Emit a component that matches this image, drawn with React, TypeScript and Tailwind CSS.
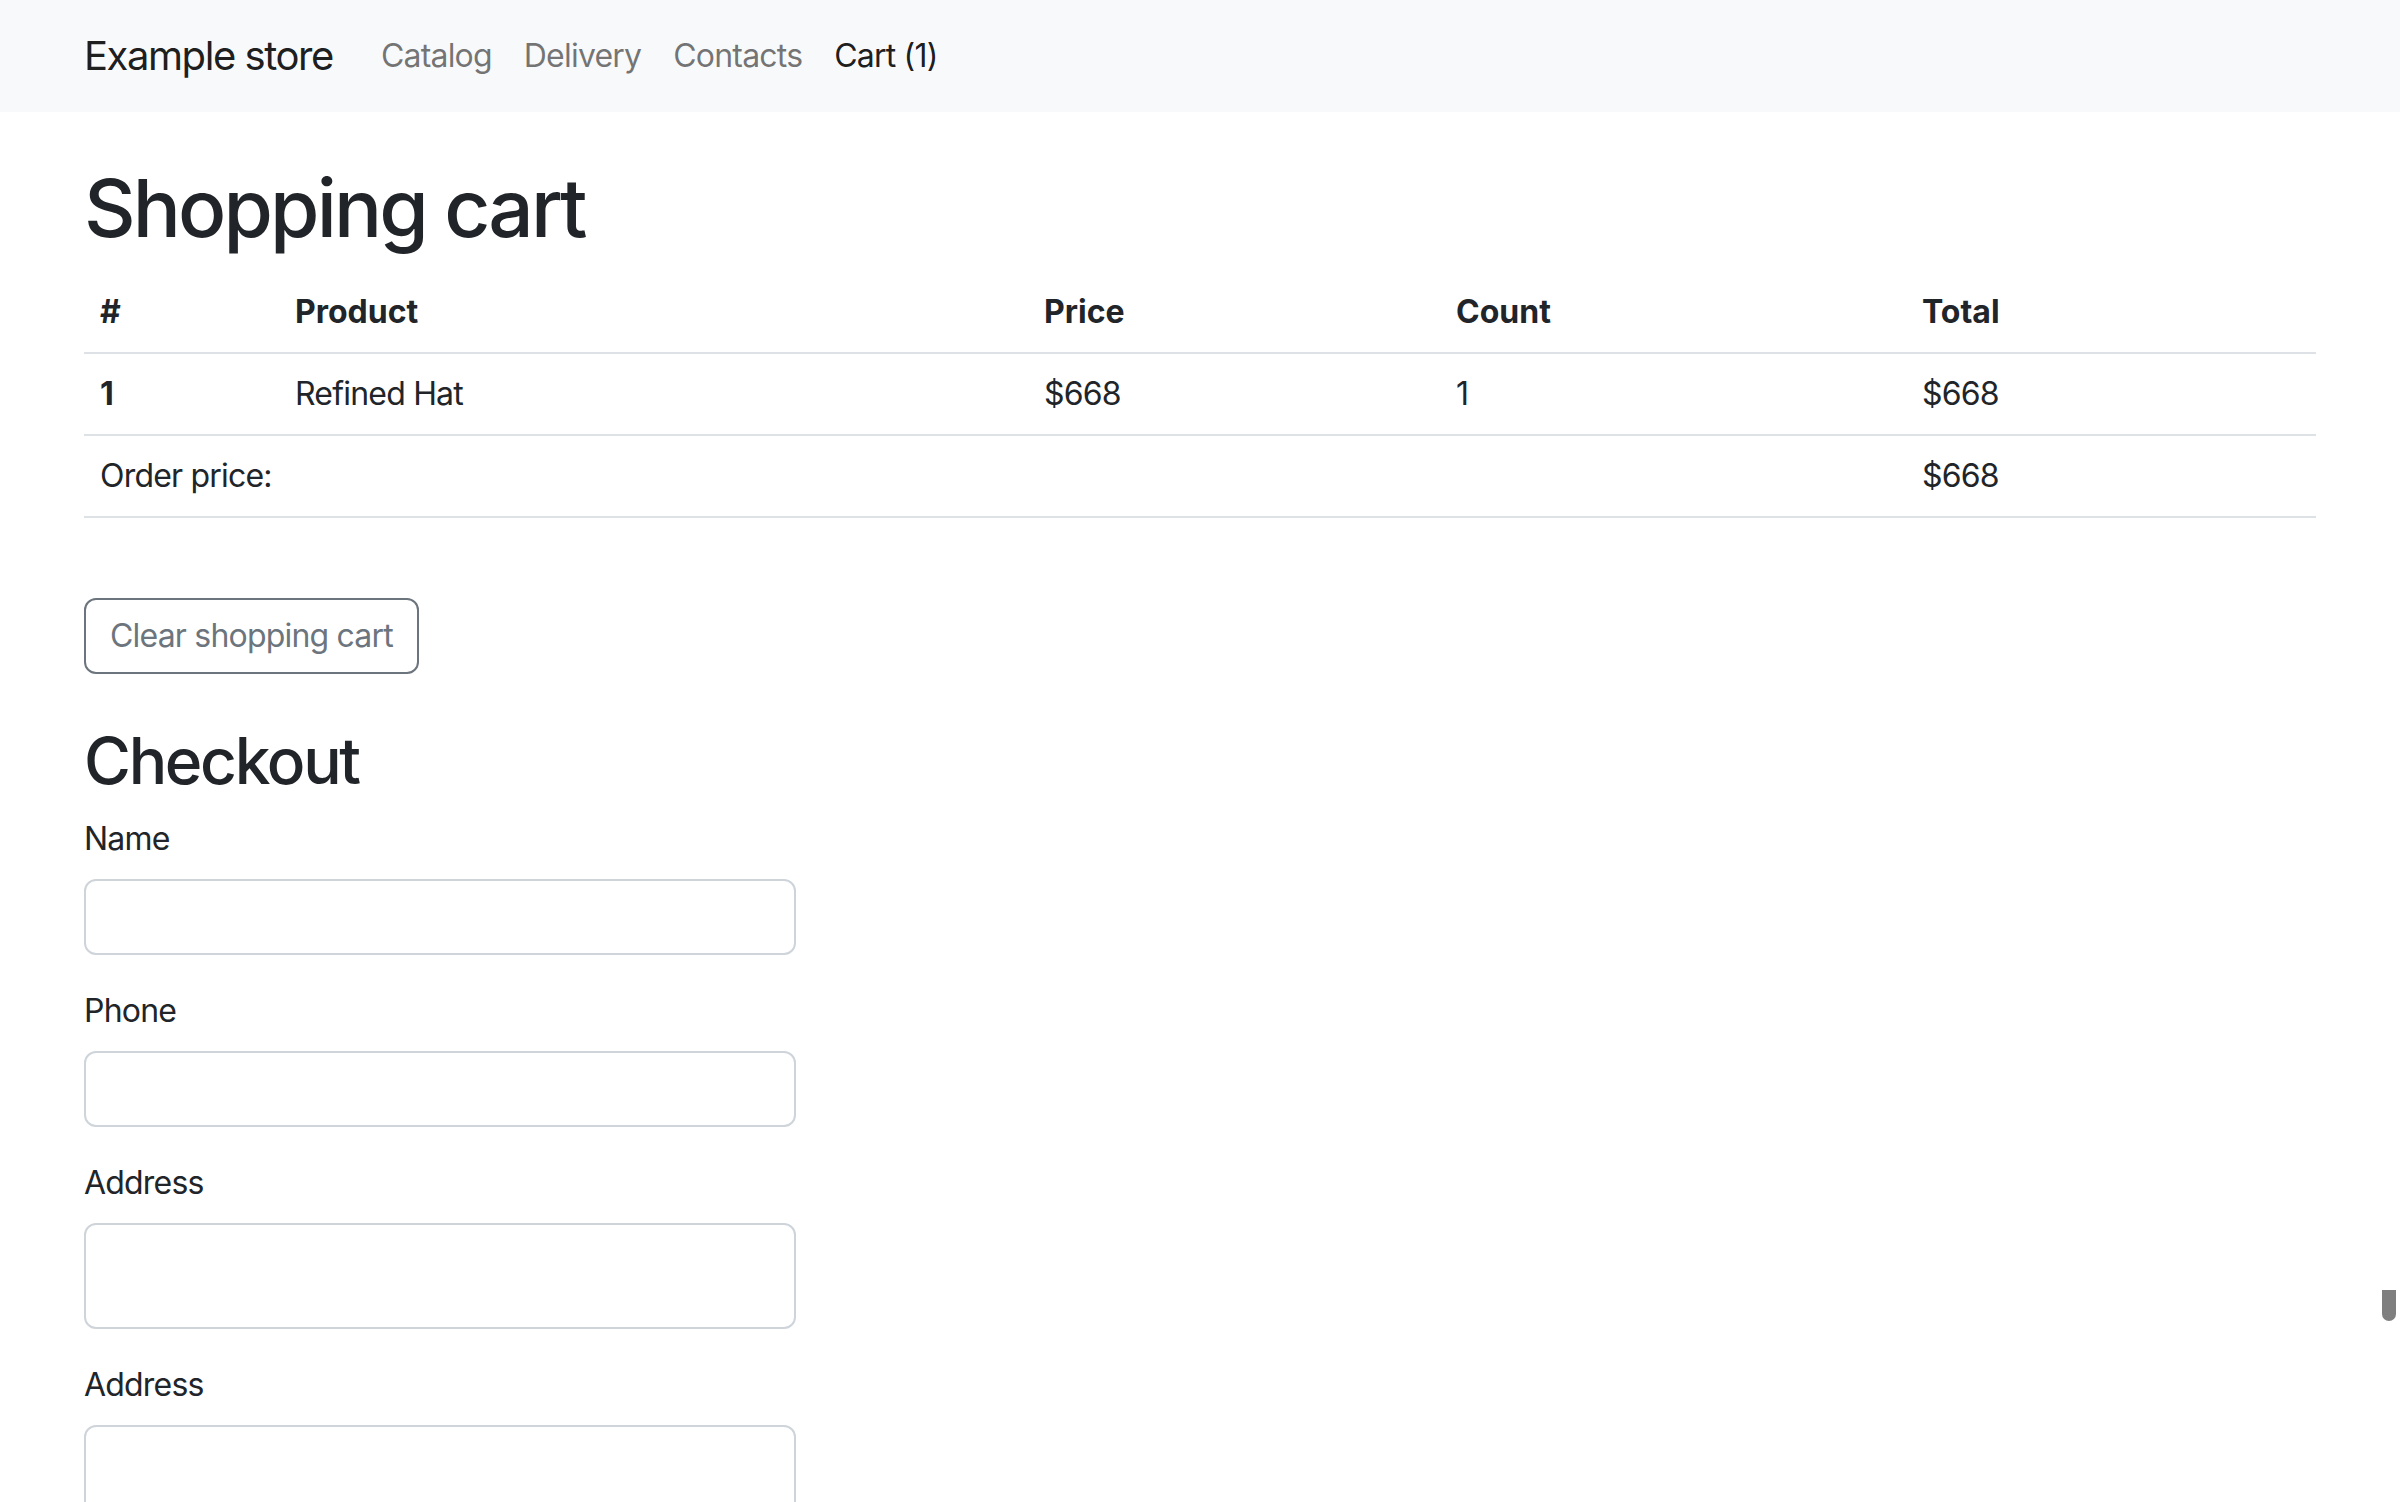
import React from "react";

const navLinks = [
  { label: "Catalog", active: false },
  { label: "Delivery", active: false },
  { label: "Contacts", active: false },
  { label: "Cart (1)", active: true },
];

const fields = [
  { label: "Name", multiline: false },
  { label: "Phone", multiline: false },
  { label: "Address", multiline: true },
  { label: "Address", multiline: true },
];

function Navbar() {
  return (
    <nav className="bg-[#f8f9fa] py-[16px]">
      <div className="mx-auto flex max-w-[2280px] items-center px-[24px]">
        <a href="#" className="mr-[32px] py-[10px] text-[40px] leading-[60px] tracking-[-0.036em] text-black/90">
          Example store
        </a>
        <ul className="flex items-center">
          {navLinks.map((l) => (
            <li key={l.label}>
              <a
                href="#"
                className={
                  l.active
                    ? "block px-[16px] py-[16px] text-[32px] leading-[48px] text-black/90"
                    : "block px-[16px] py-[16px] text-[32px] leading-[48px] text-black/55"
                }
              >
                {l.label}
              </a>
            </li>
          ))}
        </ul>
      </div>
    </nav>
  );
}

function CartTable() {
  const cell = "border-b-2 border-[#dee2e6] px-[16px] py-[16px] text-left align-top leading-[48px]";
  const head = `${cell} font-bold tracking-normal`;
  return (
    <table className="w-full table-fixed border-collapse">
      <thead>
        <tr>
          <th className={`${head} w-[195px]`}>#</th>
          <th className={`${head} w-[749px]`}>Product</th>
          <th className={`${head} w-[412px]`}>Price</th>
          <th className={`${head} w-[466px]`}>Count</th>
          <th className={head}>Total</th>
        </tr>
      </thead>
      <tbody>
        <tr>
          <th className={head}>1</th>
          <td className={cell}>Refined Hat</td>
          <td className={cell}>$668</td>
          <td className={cell}>1</td>
          <td className={cell}>$668</td>
        </tr>
        <tr>
          <td className={cell} colSpan={4}>
            Order price:
          </td>
          <td className={cell}>$668</td>
        </tr>
      </tbody>
    </table>
  );
}

export default function App() {
  return (
    <div className="relative min-h-screen bg-white font-['Inter',sans-serif] text-[32px] leading-[48px] tracking-[-0.025em] text-[#212529]">
      <Navbar />
      <main className="mx-auto mt-[48px] max-w-[2280px] px-[24px]">
        <h1 className="mb-[16px] text-[80px] font-medium leading-[96px] tracking-[-0.036em]">Shopping cart</h1>
        <CartTable />

        <div className="mt-[80px]">
          <button className="rounded-[12px] border-2 border-[#6c757d] px-[24px] py-[12px] text-[32px] leading-[48px] text-[#6c757d]">
            Clear shopping cart
          </button>
        </div>

        <h2 className="mt-[48px] mb-[16px] text-[64px] font-medium leading-[77px] tracking-[-0.036em]">Checkout</h2>
        <form className="w-[712px]">
          {fields.map((f, i) => (
            <div key={i} className="mb-[32px]">
              <label className="mb-[16px] block">{f.label}</label>
              {f.multiline ? (
                <textarea className="block h-[106px] w-full resize-none rounded-[12px] border-2 border-[#ced4da] px-[24px] py-[12px]" />
              ) : (
                <input className="block h-[76px] w-full rounded-[12px] border-2 border-[#ced4da] px-[24px] py-[12px]" />
              )}
            </div>
          ))}
        </form>
      </main>

      {/* overlay scrollbar thumb */}
      <div className="fixed right-[4px] top-[1290px] h-[31px] w-[14px] rounded-b-full bg-[#7f7f7f]" />
    </div>
  );
}
